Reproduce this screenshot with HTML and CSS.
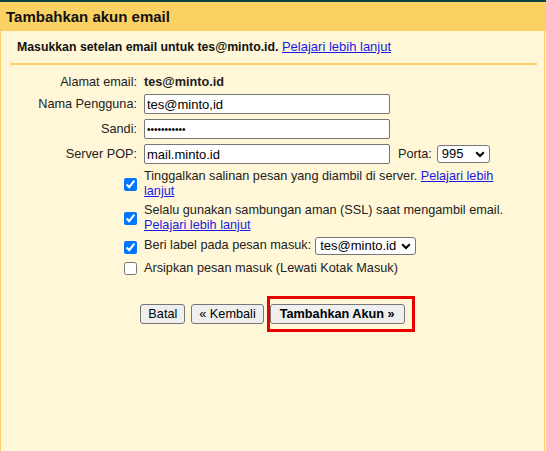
FILE: index.html
```html
<!DOCTYPE html>
<html lang="id">
<head>
<meta charset="utf-8">
<title>Tambahkan akun email</title>
<link rel="stylesheet" href="styles.css">
</head>
<body>
<div class="topbar"></div>
<header class="header"><h1 class="title">Tambahkan akun email</h1></header>
<main class="panel">
  <p class="intro"><b>Masukkan setelan email untuk tes@minto.id.</b> <a href="#" class="link">Pelajari lebih lanjut</a></p>

  <div class="fields">
    <span class="label">Alamat email:</span>
    <span class="value strong">tes@minto.id</span>

    <label class="label" for="user">Nama Pengguna:</label>
    <div class="value"><input id="user" class="text" type="text" value="tes@minto,id"></div>

    <label class="label" for="pass">Sandi:</label>
    <div class="value"><input id="pass" class="text pw" type="password" value="abcdefghijk"></div>

    <label class="label" for="pop">Server POP:</label>
    <div class="value inline">
      <input id="pop" class="text" type="text" value="mail.minto.id">
      <label class="porta" for="port">Porta:</label>
      <span class="select-wrap">
        <select id="port" class="select port"><option>995</option></select>
        <svg class="chev" width="10" height="7" viewBox="0 0 10 7"><polyline points="1.2,1.2 5,5 8.8,1.2" fill="none" stroke="#000" stroke-width="2"/></svg>
      </span>
    </div>
  </div>

  <div class="options">
    <div class="check"><input type="checkbox" checked></div>
    <div class="opt-text">Tinggalkan salinan pesan yang diambil di server. <a href="#" class="link">Pelajari lebih lanjut</a></div>

    <div class="check"><input type="checkbox" checked></div>
    <div class="opt-text">Selalu gunakan sambungan aman (SSL) saat mengambil email. <a href="#" class="link">Pelajari lebih lanjut</a></div>

    <div class="check"><input type="checkbox" checked></div>
    <div class="opt-text inline tall">Beri label pada pesan masuk:
      <span class="select-wrap">
        <select class="select labelsel"><option>tes@minto.id</option></select>
        <svg class="chev" width="10" height="7" viewBox="0 0 10 7"><polyline points="1.2,1.2 5,5 8.8,1.2" fill="none" stroke="#000" stroke-width="2"/></svg>
      </span>
    </div>

    <div class="check"><input type="checkbox"></div>
    <div class="opt-text">Arsipkan pesan masuk (Lewati Kotak Masuk)</div>
  </div>

  <div class="actions">
    <button class="btn" type="button">Batal</button>
    <button class="btn" type="button">« Kembali</button>
    <span class="mark-wrap">
      <button class="btn primary" type="button">Tambahkan Akun »</button>
      <span class="mark"></span>
    </span>
  </div>
</main>
</body>
</html>
```

FILE: styles.css
```css
* { box-sizing: border-box; }

html, body {
  margin: 0;
  padding: 0;
  background: #fff7d7;
  font-family: "Liberation Sans", Arial, sans-serif;
  font-size: 12.7px;
  color: #222;
}

.topbar {
  height: 2px;
  background: #0d4242;
}

.header {
  height: 29px;
  background: #fad163;
  padding-left: 6px;
}

.title {
  margin: 0;
  font-size: 15px;
  line-height: 29px;
  font-weight: bold;
  color: #111;
}

.panel {
  width: 545px;
  height: 420px;
  border-left: 1px solid #fad163;
  border-right: 1px solid #fad163;
  background: #fff7d7;
}

.intro {
  margin: 0 7px 0 9px;
  padding: 8px 7px 8px;
  line-height: 15px;
  border-bottom: 2px solid #fad163;
  color: #111;
}

.intro b {
  font-size: 12.3px;
}

.intro .link {
  font-size: 13px;
}

.link {
  color: #1a1ae6;
  text-decoration: underline;
}

.fields {
  display: grid;
  grid-template-columns: 130px auto;
  column-gap: 7px;
  row-gap: 5px;
  align-items: center;
  margin-top: 10px;
  padding-left: 6px;
}

.label {
  text-align: right;
  white-space: nowrap;
  line-height: 14px;
}

.value {
  line-height: 14px;
}

.strong {
  font-weight: bold;
}

.inline {
  display: flex;
  align-items: center;
}

.text {
  width: 246px;
  height: 20px;
  margin: 0;
  padding: 1px 2px;
  border: 1px solid #767676;
  border-radius: 2px;
  background: #fff;
  font-family: "Liberation Sans", Arial, sans-serif;
  font-size: 13px;
  color: #000;
}

.pw {
  font-size: 10px;
}

.porta {
  margin-left: 8px;
  margin-right: 5px;
}

.select-wrap {
  position: relative;
  display: inline-block;
  vertical-align: middle;
}

.select {
  -webkit-appearance: none;
  appearance: none;
  display: block;
  height: 18px;
  margin: 0;
  padding: 0 16px 0 4px;
  border: 1px solid #767676;
  border-radius: 3px;
  background: #fff;
  font-family: "Liberation Sans", Arial, sans-serif;
  font-size: 13px;
  line-height: 16px;
  color: #000;
}

.port { width: 53px; }
.labelsel { width: 101px; }

.chev {
  position: absolute;
  right: 5px;
  top: 6px;
  pointer-events: none;
}

.options {
  display: grid;
  grid-template-columns: 130px 375px;
  column-gap: 7px;
  row-gap: 3px;
  align-items: center;
  margin-top: 5px;
  padding-left: 6px;
}

.check {
  display: flex;
  justify-content: flex-end;
}

.check input {
  width: 13px;
  height: 13px;
  margin: 0;
}

.opt-text {
  line-height: 15.4px;
}

.opt-text.tall {
  padding-bottom: 3px;
}

.opt-text .select-wrap {
  margin-left: 4px;
}

.actions {
  display: flex;
  justify-content: center;
  gap: 6px;
  margin-top: 28px;
}

.btn {
  height: 20px;
  margin: 0;
  padding: 0 7px;
  border: 1px solid #767676;
  border-radius: 3px;
  background: #efefef;
  font-family: "Liberation Sans", Arial, sans-serif;
  font-size: 12.7px;
  color: #000;
}

.primary {
  font-weight: bold;
  padding: 0 9px;
}

.mark-wrap {
  position: relative;
  display: inline-block;
}

.mark {
  position: absolute;
  left: -3px;
  top: -8px;
  width: 148px;
  height: 36px;
  border: 3px solid #e60000;
  pointer-events: none;
}
```
